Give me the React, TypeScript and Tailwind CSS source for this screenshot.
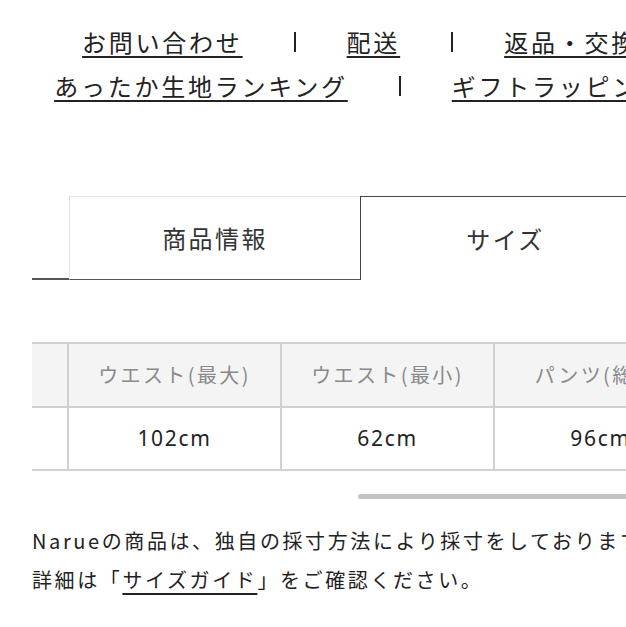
import React from 'react';

const jp = "font-['Noto_Sans_CJK_JP','Noto_Sans',sans-serif]";

const linkRows: string[][] = [
	['お問い合わせ', '配送', '返品・交換'],
	['あったか生地ランキング', 'ギフトラッピング']
];

const columns = [
	{ label: '', value: 'フリーサイズ' },
	{ label: 'ウエスト(最大)', value: '102cm' },
	{ label: 'ウエスト(最小)', value: '62cm' },
	{ label: 'パンツ(総丈)', value: '96cm' },
	{ label: '股下', value: '68cm' },
	{ label: 'わたり', value: '32cm' }
];

const Separator = () => <span className="block w-[2px] h-[20px] bg-[#222]" />;

const FooterLinks = () => (
	<nav className="pt-[20px]">
		{linkRows.map((row, i) => (
			<div key={i} className="flex items-center justify-center gap-[51px] h-[44px]">
				{row.map((label, j) => (
					<React.Fragment key={label}>
						{j > 0 && <Separator />}
						<a
							href="#"
							className="text-[24px] leading-[44px] tracking-[0.115em] text-[#222] underline decoration-[2px] underline-offset-[4px]"
						>
							{label}
						</a>
					</React.Fragment>
				))}
			</div>
		))}
	</nav>
);

const Tabs = () => (
	<div className="flex mt-[88px] mx-[32px] text-[24px] text-[#333]">
		<div className="w-[37px] h-[84px] border-b-2 border-[#555]" />
		<button className="w-[291px] h-[84px] border-t border-l border-[#e3e3e3] border-b border-b-[#555] tracking-[0.1em]">
			商品情報
		</button>
		<button className="w-[291px] h-[84px] border-t border-l border-r border-[#444] tracking-[0.1em]">
			サイズ
		</button>
		<div className="w-[37px] h-[84px] border-b border-[#555]" />
	</div>
);

const SizeTable = () => (
	<div className="mt-[62px] mx-[32px]">
		<div className="overflow-hidden">
			<div className="ml-[-176px] w-max border-t-2 border-[#d0d0d0]">
				<div className="flex bg-[#f4f4f4] border-b-2 border-[#d0d0d0]">
					{columns.map((c, i) => (
						<div
							key={i}
							className="w-[213px] h-[62px] shrink-0 flex items-center justify-center border-r-2 border-[#d0d0d0] text-[20px] text-[#8a8a8a] tracking-[0.12em]"
						>
							{c.label}
						</div>
					))}
				</div>
				<div className="flex border-b-2 border-[#d0d0d0]">
					{columns.map((c, i) => (
						<div
							key={i}
							className={`w-[213px] h-[61px] shrink-0 flex items-center justify-center border-r-2 border-[#d0d0d0] text-[21px] text-[#222] tracking-[0.08em] ${
								i === 0 ? '' : "font-['Noto_Sans',sans-serif]"
							}`}
						>
							{c.value}
						</div>
					))}
				</div>
			</div>
		</div>
		<div className="mt-[23px] ml-[326px] w-[330px] h-[5px] rounded-full bg-[#c4c4c4]" />
	</div>
);

const SizeNote = () => (
	<div className="mt-[22px] mx-[32px] text-[20px] leading-[39px] tracking-[0.13em] text-[#222] whitespace-nowrap">
		<p>Narueの商品は、独自の採寸方法により採寸をしております。</p>
		<p>
			詳細は「
			<a href="#" className="underline decoration-[2px] underline-offset-[5px]">
				サイズガイド
			</a>
			」をご確認ください。
		</p>
	</div>
);

export default function App() {
	return (
		<div className={`w-[720px] min-h-[627px] bg-white pb-[40px] ${jp}`}>
			<FooterLinks />
			<Tabs />
			<SizeTable />
			<SizeNote />
		</div>
	);
}
